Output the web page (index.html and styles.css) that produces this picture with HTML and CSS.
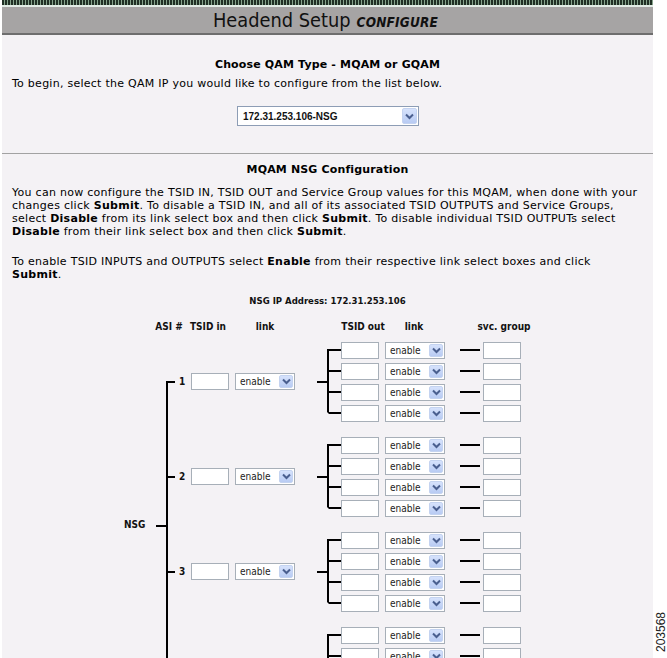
FILE: index.html
```html
<!DOCTYPE html>
<html>
<head>
<meta charset="utf-8">
<title>Headend Setup</title>
<link rel="stylesheet" href="styles.css">
</head>
<body>
<div class="page">
  <div class="stripe"></div>
  <div class="stripe-line"></div>
  <div class="titlebar"><span class="title">Headend Setup</span><span class="sub">CONFIGURE</span></div>

  <section class="sec sec1">
    <h2 class="h">Choose QAM Type - MQAM or GQAM</h2>
    <p class="intro">To begin, select the QAM IP you would like to configure from the list below.</p>
    <div class="selrow">
      <div class="bigsel"><span class="bigtxt">172.31.253.106-NSG</span><span class="arr big"><svg width="9" height="7" viewBox="0 0 9 7"><path d="M1 1.5 L4.5 5 L8 1.5" fill="none" stroke="#4a5f8f" stroke-width="2"/></svg></span></div>
    </div>
  </section>

  <section class="sec sec2">
    <h2 class="h h2">MQAM NSG Configuration</h2>
    <p class="para p1">You can now configure the TSID IN, TSID OUT and Service Group values for this MQAM, when done with your<br>changes click <b>Submit</b>. To disable a TSID IN, and all of its associated TSID OUTPUTS and Service Groups,<br>select <b>Disable</b> from its link select box and then click <b>Submit</b>. To disable individual TSID OUTPUTs select<br><b>Disable</b> from their link select box and then click <b>Submit</b>.</p>
    <p class="para p2">To enable TSID INPUTS and OUTPUTS select <b>Enable</b> from their respective link select boxes and click<br><b>Submit</b>.</p>

    <div class="ip">NSG IP Address: 172.31.253.106</div>

    <div class="heads">
      <span></span><span>ASI #</span><span>TSID in</span><span>link</span><span></span><span>TSID out</span><span>link</span><span></span><span>svc. group</span>
    </div>

    <div class="diagram">
      <div class="nsg"><span class="nsglabel">NSG</span><span class="nsgtick"></span></div>
      <div class="groups">

        <div class="group g1">
          <div class="spine"><div class="half top"></div><div class="half bot"></div></div>
          <span class="num">1</span>
          <span class="inp"></span>
          <span class="sel"><span class="seltxt">enable</span><span class="arr"><svg width="9" height="7" viewBox="0 0 9 7"><path d="M1 1.5 L4.5 5 L8 1.5" fill="none" stroke="#4a5f8f" stroke-width="2"/></svg></span></span>
          <span class="ltick"></span>
          <div class="outs">
            <div class="orow r1"><div class="conn"><div class="half top"></div><div class="half bot"></div></div><span class="inp"></span><span class="sel"><span class="seltxt">enable</span><span class="arr"><svg width="9" height="7" viewBox="0 0 9 7"><path d="M1 1.5 L4.5 5 L8 1.5" fill="none" stroke="#4a5f8f" stroke-width="2"/></svg></span></span><span class="dash"></span><span class="inp"></span></div>
            <div class="orow"><div class="conn"><div class="half top"></div><div class="half bot"></div></div><span class="inp"></span><span class="sel"><span class="seltxt">enable</span><span class="arr"><svg width="9" height="7" viewBox="0 0 9 7"><path d="M1 1.5 L4.5 5 L8 1.5" fill="none" stroke="#4a5f8f" stroke-width="2"/></svg></span></span><span class="dash"></span><span class="inp"></span></div>
            <div class="orow"><div class="conn"><div class="half top"></div><div class="half bot"></div></div><span class="inp"></span><span class="sel"><span class="seltxt">enable</span><span class="arr"><svg width="9" height="7" viewBox="0 0 9 7"><path d="M1 1.5 L4.5 5 L8 1.5" fill="none" stroke="#4a5f8f" stroke-width="2"/></svg></span></span><span class="dash"></span><span class="inp"></span></div>
            <div class="orow r4"><div class="conn"><div class="half top"></div><div class="half bot"></div></div><span class="inp"></span><span class="sel"><span class="seltxt">enable</span><span class="arr"><svg width="9" height="7" viewBox="0 0 9 7"><path d="M1 1.5 L4.5 5 L8 1.5" fill="none" stroke="#4a5f8f" stroke-width="2"/></svg></span></span><span class="dash"></span><span class="inp"></span></div>
          </div>
        </div>

        <div class="group">
          <div class="spine"><div class="half top"></div><div class="half bot"></div></div>
          <span class="num">2</span>
          <span class="inp"></span>
          <span class="sel"><span class="seltxt">enable</span><span class="arr"><svg width="9" height="7" viewBox="0 0 9 7"><path d="M1 1.5 L4.5 5 L8 1.5" fill="none" stroke="#4a5f8f" stroke-width="2"/></svg></span></span>
          <span class="ltick"></span>
          <div class="outs">
            <div class="orow r1"><div class="conn"><div class="half top"></div><div class="half bot"></div></div><span class="inp"></span><span class="sel"><span class="seltxt">enable</span><span class="arr"><svg width="9" height="7" viewBox="0 0 9 7"><path d="M1 1.5 L4.5 5 L8 1.5" fill="none" stroke="#4a5f8f" stroke-width="2"/></svg></span></span><span class="dash"></span><span class="inp"></span></div>
            <div class="orow"><div class="conn"><div class="half top"></div><div class="half bot"></div></div><span class="inp"></span><span class="sel"><span class="seltxt">enable</span><span class="arr"><svg width="9" height="7" viewBox="0 0 9 7"><path d="M1 1.5 L4.5 5 L8 1.5" fill="none" stroke="#4a5f8f" stroke-width="2"/></svg></span></span><span class="dash"></span><span class="inp"></span></div>
            <div class="orow"><div class="conn"><div class="half top"></div><div class="half bot"></div></div><span class="inp"></span><span class="sel"><span class="seltxt">enable</span><span class="arr"><svg width="9" height="7" viewBox="0 0 9 7"><path d="M1 1.5 L4.5 5 L8 1.5" fill="none" stroke="#4a5f8f" stroke-width="2"/></svg></span></span><span class="dash"></span><span class="inp"></span></div>
            <div class="orow r4"><div class="conn"><div class="half top"></div><div class="half bot"></div></div><span class="inp"></span><span class="sel"><span class="seltxt">enable</span><span class="arr"><svg width="9" height="7" viewBox="0 0 9 7"><path d="M1 1.5 L4.5 5 L8 1.5" fill="none" stroke="#4a5f8f" stroke-width="2"/></svg></span></span><span class="dash"></span><span class="inp"></span></div>
          </div>
        </div>

        <div class="group">
          <div class="spine"><div class="half top"></div><div class="half bot"></div></div>
          <span class="num">3</span>
          <span class="inp"></span>
          <span class="sel"><span class="seltxt">enable</span><span class="arr"><svg width="9" height="7" viewBox="0 0 9 7"><path d="M1 1.5 L4.5 5 L8 1.5" fill="none" stroke="#4a5f8f" stroke-width="2"/></svg></span></span>
          <span class="ltick"></span>
          <div class="outs">
            <div class="orow r1"><div class="conn"><div class="half top"></div><div class="half bot"></div></div><span class="inp"></span><span class="sel"><span class="seltxt">enable</span><span class="arr"><svg width="9" height="7" viewBox="0 0 9 7"><path d="M1 1.5 L4.5 5 L8 1.5" fill="none" stroke="#4a5f8f" stroke-width="2"/></svg></span></span><span class="dash"></span><span class="inp"></span></div>
            <div class="orow"><div class="conn"><div class="half top"></div><div class="half bot"></div></div><span class="inp"></span><span class="sel"><span class="seltxt">enable</span><span class="arr"><svg width="9" height="7" viewBox="0 0 9 7"><path d="M1 1.5 L4.5 5 L8 1.5" fill="none" stroke="#4a5f8f" stroke-width="2"/></svg></span></span><span class="dash"></span><span class="inp"></span></div>
            <div class="orow"><div class="conn"><div class="half top"></div><div class="half bot"></div></div><span class="inp"></span><span class="sel"><span class="seltxt">enable</span><span class="arr"><svg width="9" height="7" viewBox="0 0 9 7"><path d="M1 1.5 L4.5 5 L8 1.5" fill="none" stroke="#4a5f8f" stroke-width="2"/></svg></span></span><span class="dash"></span><span class="inp"></span></div>
            <div class="orow r4"><div class="conn"><div class="half top"></div><div class="half bot"></div></div><span class="inp"></span><span class="sel"><span class="seltxt">enable</span><span class="arr"><svg width="9" height="7" viewBox="0 0 9 7"><path d="M1 1.5 L4.5 5 L8 1.5" fill="none" stroke="#4a5f8f" stroke-width="2"/></svg></span></span><span class="dash"></span><span class="inp"></span></div>
          </div>
        </div>

        <div class="group g4">
          <div class="spine"><div class="half top"></div><div class="half bot"></div></div>
          <span class="num">4</span>
          <span class="inp"></span>
          <span class="sel"><span class="seltxt">enable</span><span class="arr"><svg width="9" height="7" viewBox="0 0 9 7"><path d="M1 1.5 L4.5 5 L8 1.5" fill="none" stroke="#4a5f8f" stroke-width="2"/></svg></span></span>
          <span class="ltick"></span>
          <div class="outs">
            <div class="orow r1"><div class="conn"><div class="half top"></div><div class="half bot"></div></div><span class="inp"></span><span class="sel"><span class="seltxt">enable</span><span class="arr"><svg width="9" height="7" viewBox="0 0 9 7"><path d="M1 1.5 L4.5 5 L8 1.5" fill="none" stroke="#4a5f8f" stroke-width="2"/></svg></span></span><span class="dash"></span><span class="inp"></span></div>
            <div class="orow"><div class="conn"><div class="half top"></div><div class="half bot"></div></div><span class="inp"></span><span class="sel"><span class="seltxt">enable</span><span class="arr"><svg width="9" height="7" viewBox="0 0 9 7"><path d="M1 1.5 L4.5 5 L8 1.5" fill="none" stroke="#4a5f8f" stroke-width="2"/></svg></span></span><span class="dash"></span><span class="inp"></span></div>
            <div class="orow"><div class="conn"><div class="half top"></div><div class="half bot"></div></div><span class="inp"></span><span class="sel"><span class="seltxt">enable</span><span class="arr"><svg width="9" height="7" viewBox="0 0 9 7"><path d="M1 1.5 L4.5 5 L8 1.5" fill="none" stroke="#4a5f8f" stroke-width="2"/></svg></span></span><span class="dash"></span><span class="inp"></span></div>
            <div class="orow r4"><div class="conn"><div class="half top"></div><div class="half bot"></div></div><span class="inp"></span><span class="sel"><span class="seltxt">enable</span><span class="arr"><svg width="9" height="7" viewBox="0 0 9 7"><path d="M1 1.5 L4.5 5 L8 1.5" fill="none" stroke="#4a5f8f" stroke-width="2"/></svg></span></span><span class="dash"></span><span class="inp"></span></div>
          </div>
        </div>

      </div>
    </div>
  </section>
</div>
<div class="fignum">203568</div>
</body>
</html>
```

FILE: styles.css
```css
html, body {
  margin: 0;
  padding: 0;
  overflow: hidden;
  background: #ffffff;
}
body {
  font-family: "DejaVu Sans", Verdana, sans-serif;
  font-size: 11px;
  color: #000;
  position: relative;
}
.page {
  margin-left: 2px;
  width: 651px;
  background: #f4f2f5;
  padding-bottom: 60px;
}
.stripe {
  height: 5px;
  background: repeating-linear-gradient(90deg, #1f2f24 0 2px, #86a38c 2px 3px);
}
.stripe-line {
  height: 2px;
  background: #e2ece6;
}
.titlebar {
  height: 26px;
  background: #a6a4a4;
  border-bottom: 2px solid #6e6e6e;
  display: flex;
  align-items: center;
  justify-content: center;
  gap: 6px;
  padding-right: 4px;
}
.title {
  font-family: "DejaVu Sans Condensed", "DejaVu Sans", sans-serif;
  font-stretch: condensed;
  font-size: 19.8px;
  color: #111;
}
.sub {
  font-family: "DejaVu Sans Condensed", "DejaVu Sans", sans-serif;
  font-stretch: condensed;
  font-size: 13.5px;
  font-style: italic;
  font-weight: bold;
  color: #111;
  padding-top: 3px;
  letter-spacing: 0.2px;
}
.sec {
  padding: 0 10px;
}
.sec1 {
  padding-top: 23px;
  padding-bottom: 27px;
  border-bottom: 1px solid #a2a2a2;
}
.h {
  margin: 0;
  text-align: center;
  font-size: 11px;
  line-height: 13px;
  font-weight: bold;
  letter-spacing: 0.15px;
}
.intro {
  margin: 6px 0 0;
  line-height: 13px;
  letter-spacing: 0.26px;
}
.selrow {
  display: flex;
  justify-content: center;
  margin-top: 16px;
  padding-left: 1px;
}
.bigsel {
  width: 182px;
  height: 20px;
  box-sizing: border-box;
  border: 1px solid #8d9db5;
  background: #fff;
  display: flex;
  align-items: center;
  justify-content: space-between;
  padding-left: 5px;
}
.bigtxt {
  font-family: "Liberation Sans", Arial, sans-serif;
  font-weight: bold;
  font-size: 10px;
  color: #111;
}
.arr {
  width: 14px;
  height: 13px;
  margin-right: 1px;
  box-sizing: border-box;
  border-radius: 2px;
  background: linear-gradient(#d6e2fc, #b8cbf3);
  border: 1px solid #c4d3f0;
  display: flex;
  align-items: center;
  justify-content: center;
}
.arr.big {
  width: 15px;
  height: 16px;
}
.sec2 {
  padding-top: 9px;
}
.para {
  margin: 0 -8px 0 0;
  line-height: 13.3px;
  letter-spacing: 0.28px;
  white-space: nowrap;
}
.p1 {
  margin-top: 9.5px;
}
.p2 {
  margin-top: 16.5px;
}
.ip {
  margin-top: 12.5px;
  text-align: center;
  font-family: "DejaVu Sans Condensed", "DejaVu Sans", sans-serif;
  font-stretch: condensed;
  font-weight: bold;
  font-size: 9.5px;
  line-height: 13px;
  color: #111;
}
.heads {
  margin-top: 13px;
  margin-left: 112px;
  display: grid;
  grid-template-columns: 26px 38px 40px 74px 22px 78px 24px 48px 60px;
  font-family: "DejaVu Sans Condensed", "DejaVu Sans", sans-serif;
  font-stretch: condensed;
  font-weight: bold;
  font-size: 10px;
  line-height: 13px;
  color: #111;
  text-align: center;
  white-space: nowrap;
}
.diagram {
  margin-top: 1px;
  margin-left: 112px;
  display: flex;
}
.nsg {
  width: 42px;
  display: flex;
  align-items: center;
}
.nsglabel {
  width: 32px;
  font-family: "DejaVu Sans Condensed", "DejaVu Sans", sans-serif;
  font-stretch: condensed;
  font-weight: bold;
  font-size: 10px;
  color: #111;
}
.nsgtick {
  width: 10px;
  border-top: 2px solid #000;
  margin-top: 3px;
}
.groups {
  display: flex;
  flex-direction: column;
}
.group {
  height: 95px;
  display: flex;
  align-items: center;
}
.spine {
  align-self: stretch;
  width: 9px;
  display: flex;
  flex-direction: column;
}
.half {
  flex: 1;
  border-left: 2px solid #000;
}
.half.bot {
  border-top: 2px solid #000;
}
.g1 .spine .top {
  border-left-color: transparent;
}
.g4 .spine .bot {
  border-left-color: transparent;
}
.num {
  width: 16px;
  box-sizing: border-box;
  padding-left: 4px;
  font-family: "DejaVu Sans Condensed", "DejaVu Sans", sans-serif;
  font-stretch: condensed;
  font-weight: bold;
  font-size: 10px;
  color: #111;
}
.inp {
  display: block;
  width: 38px;
  height: 17px;
  box-sizing: border-box;
  border: 1px solid #a7afb8;
  background: #fff;
}
.sel {
  margin-left: 6px;
  width: 60px;
  height: 17px;
  box-sizing: border-box;
  border: 1px solid #a7afb8;
  background: #fff;
  display: flex;
  align-items: center;
  justify-content: space-between;
  padding-left: 4px;
}
.seltxt {
  font-family: "DejaVu Sans Condensed", "DejaVu Sans", sans-serif;
  font-stretch: condensed;
  font-size: 10px;
  color: #222;
}
.ltick {
  width: 10px;
  margin-left: 22px;
  border-top: 2px solid #000;
}
.outs {
  display: flex;
  flex-direction: column;
}
.orow {
  height: 21px;
  display: flex;
  align-items: center;
}
.conn {
  align-self: stretch;
  width: 14px;
  display: flex;
  flex-direction: column;
}
.r1 .conn .top {
  border-left-color: transparent;
}
.r4 .conn .bot {
  border-left-color: transparent;
}
.dash {
  width: 20px;
  margin-left: 15px;
  margin-right: 3px;
  border-top: 2px solid #000;
}
.fignum {
  position: absolute;
  left: 655px;
  top: 612px;
  writing-mode: vertical-rl;
  transform: rotate(180deg);
  font-family: "Liberation Sans", Arial, sans-serif;
  font-size: 12px;
  line-height: 12px;
  color: #222;
}
```
